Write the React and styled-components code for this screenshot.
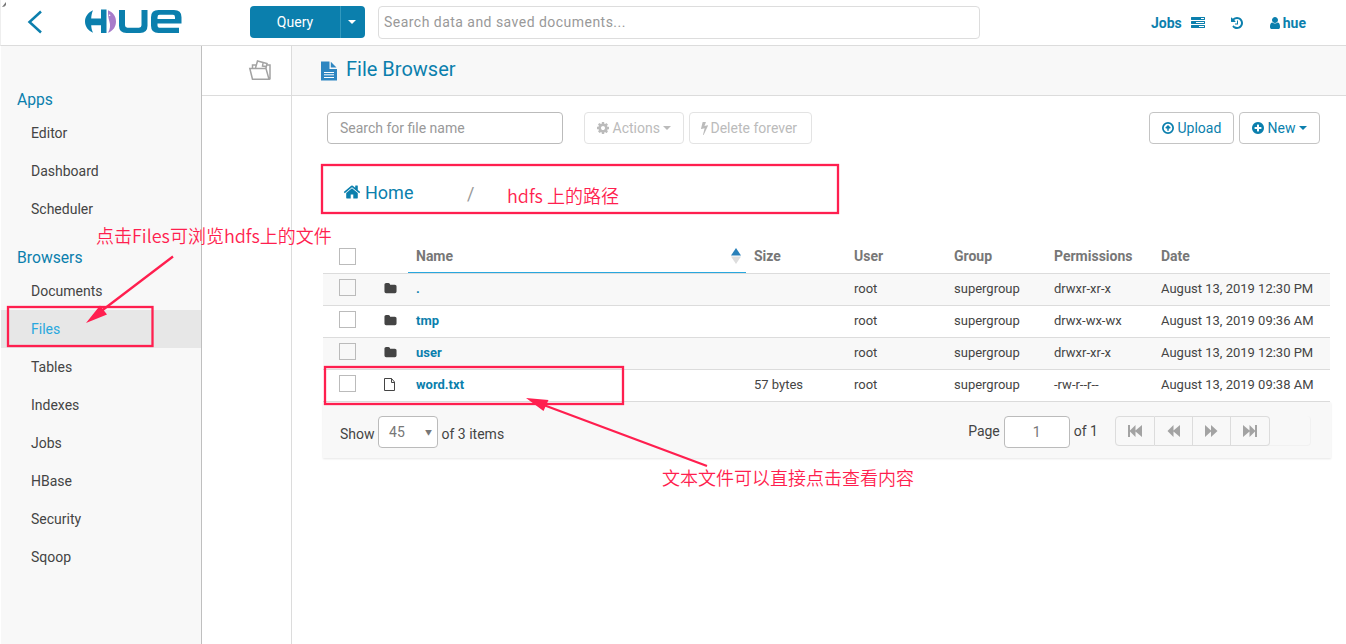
import React from 'react';
import styled, { createGlobalStyle } from 'styled-components';

const icons = {
    home: 'M1472 992v480q0 26-19 45t-45 19h-384v-384h-256v384h-384q-26 0-45-19t-19-45v-480q0-1 .5-3t.5-3l575-474 575 474q1 2 1 6zm223-69l-62 74q-8 9-21 11h-3q-13 0-21-7l-692-577-692 577q-12 8-24 7-13-2-21-11l-62-74q-8-10-7-23.5t11-21.5l719-599q32-26 76-26t76 26l244 204v-195q0-14 9-23t23-9h192q14 0 23 9t9 23v408l219 182q10 8 11 21.5t-7 23.5z',
    cog: 'M1152 896q0-106-75-181t-181-75-181 75-75 181 75 181 181 75 181-75 75-181zm512-109v222q0 12-8 23t-20 13l-185 28q-19 54-39 91 35 50 107 138 10 12 10 25t-9 23q-27 37-99 108t-94 71q-12 0-26-9l-138-108q-44 23-91 38-16 136-29 186-7 28-36 28h-222q-14 0-24.5-8.5t-11.5-21.5l-28-184q-49-16-90-37l-141 107q-10 9-25 9-14 0-25-11-126-114-165-168-7-10-7-23 0-12 8-23 15-21 51-66.5t54-70.5q-27-50-41-99l-183-27q-13-2-21-12.5t-8-23.5v-222q0-12 8-23t19-13l186-28q14-46 39-92-40-57-107-138-10-12-10-24 0-10 9-23 26-36 98.5-107.5t94.5-71.5q13 0 26 10l138 107q44-23 91-38 16-136 29-186 7-28 36-28h222q14 0 24.5 8.5t11.5 21.5l28 184q49 16 90 37l142-107q9-9 24-9 13 0 25 10 129 119 165 170 7 8 7 22 0 12-8 23-15 21-51 66.5t-54 70.5q26 50 41 98l183 28q13 2 21 12.5t8 23.5z',
    bolt: 'M1333 566q18 20 7 44l-540 1157q-13 25-42 25-4 0-14-2-17-5-25.5-19t-4.5-30l197-808-406 101q-4 1-12 1-18 0-31-11-18-15-13-39l201-825q4-14 16-23t28-9h328q19 0 32 12.5t13 29.5q0 8-5 18l-171 463 396-98q8-2 12-2 19 0 34 15z',
    plus: 'M1344 960v-128q0-26-19-45t-45-19h-256v-256q0-26-19-45t-45-19h-128q-26 0-45 19t-19 45v256h-256q-26 0-45 19t-19 45v128q0 26 19 45t45 19h256v256q0 26 19 45t45 19h128q26 0 45-19t19-45v-256h256q26 0 45-19t19-45zm320-64q0 209-103 385.5t-279.5 279.5-385.5 103-385.5-103-279.5-279.5-103-385.5 103-385.5 279.5-279.5 385.5-103 385.5 103 279.5 279.5 103 385.5z',
    upload: 'M896 352a544 544 0 1 0 0 1088a544 544 0 1 0 0-1088zM896 128a768 768 0 1 1 0 1536a768 768 0 1 1 0-1536zM896 500L1250 850L1150 960H990V1250H802V960H642L542 850z',
    user: 'M1536 1399q0 109-62.5 187t-150.5 78h-854q-88 0-150.5-78t-62.5-187q0-85 8.5-160.5t31.5-152 58.5-131 94-89 134.5-34.5q131 128 313 128t313-128q76 0 134.5 34.5t94 89 58.5 131 31.5 152 8.5 160.5zm-256-887q0 159-112.5 271.5t-271.5 112.5-271.5-112.5-112.5-271.5 112.5-271.5 271.5-112.5 271.5 112.5 112.5 271.5z',
    history: 'M1664 896q0 156-61 298t-164 245-245 164-298 61q-172 0-327-72.5t-264-204.5q-7-10-6.5-22.5t8.5-20.5l137-138q10-9 25-9 16 2 23 12 73 95 179 147t225 52q104 0 198.5-40.5t163.5-109.5 109.5-163.5 40.5-198.5-40.5-198.5-109.5-163.5-163.5-109.5-198.5-40.5q-98 0-188 35.5t-160 101.5l137 138q31 30 14 69-17 40-59 40h-448q-26 0-45-19t-19-45v-448q0-42 40-59 39-17 69 14l130 129q107-101 244.5-156.5t284.5-55.5q156 0 298 61t245 164 164 245 61 298zm-640-288v448q0 14-9 23t-23 9h-320q-14 0-23-9t-9-23v-64q0-14 9-23t23-9h224v-352q0-14 9-23t23-9h64q14 0 23 9t9 23z',
    folder: 'M1728 608v704q0 92-66 158t-158 66h-1216q-92 0-158-66t-66-158v-960q0-92 66-158t158-66h320q92 0 158 66t66 158v32h672q92 0 158 66t66 158z',
    tasks: 'M1024 1408h640v-128h-640v128zm-384-512h1024v-128h-1024v128zm640-512h384v-128h-384v128zm512 832v256q0 26-19 45t-45 19h-1664q-26 0-45-19t-19-45v-256q0-26 19-45t45-19h1664q26 0 45 19t19 45zm0-512v256q0 26-19 45t-45 19h-1664q-26 0-45-19t-19-45v-256q0-26 19-45t45-19h1664q26 0 45 19t19 45zm0-512v256q0 26-19 45t-45 19h-1664q-26 0-45-19t-19-45v-256q0-26 19-45t45-19h1664q26 0 45 19t19 45z',
};

const apps = ['Editor', 'Dashboard', 'Scheduler'];
const browsers = ['Documents', 'Files', 'Tables', 'Indexes', 'Jobs', 'HBase', 'Security', 'Sqoop'];

const files = [
    { name: '.', type: 'dir', size: '', perm: 'drwxr-xr-x', date: 'August 13, 2019 12:30 PM' },
    { name: 'tmp', type: 'dir', size: '', perm: 'drwx-wx-wx', date: 'August 13, 2019 09:36 AM' },
    { name: 'user', type: 'dir', size: '', perm: 'drwxr-xr-x', date: 'August 13, 2019 12:30 PM' },
    { name: 'word.txt', type: 'file', size: '57 bytes', perm: '-rw-r--r--', date: 'August 13, 2019 09:38 AM' },
];

const Fa = ({ name, size = 14 }) => (
    <svg width={size} height={size} viewBox="0 0 1792 1792" fill="currentColor">
        <path d={icons[name]} fillRule={name === 'upload' ? 'evenodd' : 'nonzero'} />
    </svg>
);

const Bolt = () => (
    <svg width="7" height="14" viewBox="448 0 896 1792" fill="currentColor">
        <path d={icons.bolt} />
    </svg>
);

const HueLogo = () => (
    <svg width="97" height="25" viewBox="0 0 97 26" preserveAspectRatio="none">
        <path d="M8 1.2C3 3.5 0 8 0 13s3 9.500 8 11.700C6.800 22 6.300 19.500 6.200 17H16v8h5.500V.500H16V10H6.200C6.300 7 6.800 4 8 1.200z" fill="#0b7fad" />
        <path d="M23 1.200C28.500 3.500 31 8 31 13s-2.500 9.500-8 11.800c2.200-4 2.600-7.800 1.400-11.800-1-3.500-1.600-7-1.400-11.800z" fill="#a77bca" />
        <circle cx="24.600" cy="6.500" r=".8" fill="#fff" />
        <path d="M34 1v16.500q0 7.500 7.500 7.500H55q7.500 0 7.500-7.500V1h-6v16q0 2.500-2.500 2.500H42.500Q40 19.500 40 17V1z" fill="#0b7fad" />
        <path fillRule="evenodd" d="M73.500 1H89q7.500 0 7.500 7.500V15H72.500v2.500q0 2 2 2H94V25H73.500Q66 25 66 17.500v-9Q66 1 73.500 1zM72.500 10.500H90V8.500q0-2.500-2-2.500H74.500q-2 0-2 2.500z" fill="#0b7fad" />
    </svg>
);

const PageIcon = ({ kind }) => (
    <svg width="18" height="14" viewBox="0 0 18 14" fill="#a3a3a3">
        {kind === 'first' && <path d="M2 1h2v5.500L9.500 1v5.500L16 1v12l-6.500-5.500V13L4 7.500V13H2z" />}
        {kind === 'prev' && <path d="M8.500 1v5.500L15 1v12L8.500 7.500V13L2.500 7z" />}
        {kind === 'next' && <path d="M8 1v5.500L2 1v12l6-5.500V13l6.500-6z" />}
        {kind === 'last' && <path d="M2 1v12l6.500-5.500V13l5.500-5.500V13h2V1h-2v5.500L8.500 1v5.500z" />}
    </svg>
);

const App = () => {
    return (
        <Page>
            <GlobalStyle />
            <Navbar>
                <Back>
                    <svg width="16" height="24" viewBox="0 0 16 24">
                        <path d="M14 1.500L2.500 12L14 22.500" fill="none" stroke="#0b7fad" strokeWidth="2.500" />
                    </svg>
                </Back>
                <Logo><HueLogo /></Logo>
                <QueryGroup>
                    <Query>Query</Query>
                    <QueryToggle><Caret /></QueryToggle>
                </QueryGroup>
                <TopSearch placeholder="Search data and saved documents..." />
                <NavRight>
                    <NavItem $gap={9}>Jobs <Fa name="tasks" /></NavItem>
                    <NavItem $shift={2}><Fa name="history" /></NavItem>
                    <NavItem $gap={1}><Fa name="user" />hue</NavItem>
                </NavRight>
            </Navbar>
            <Body>
                <Sidebar>
                    <MenuTitle>Apps</MenuTitle>
                    {apps.map((app) => <MenuItem key={app}>{app}</MenuItem>)}
                    <MenuTitle $next>Browsers</MenuTitle>
                    {browsers.map((item) => (
                        <MenuItem key={item} $active={item === 'Files'}>{item}</MenuItem>
                    ))}
                </Sidebar>
                <Assist>
                    <AssistTab>
                        <svg width="24" height="22" viewBox="0 0 24 22" fill="none" stroke="#a3a3a3" strokeWidth="1.500">
                            <path d="M4.500 20.200L1.800 9.500H18L21 20.200zM22 20.500V6H19M4.500 9V6H8M7.500 9L9.500 2L19 4.500L18 9M15 4L14.500 7L18 7.500" />
                        </svg>
                    </AssistTab>
                </Assist>
                <Main>
                    <TitleBar>
                        <svg width="17" height="20" viewBox="0 0 17 20">
                            <path d="M1 .500H9.500v7.500H17V19.500H1z" fill="#2e86c1" />
                            <path d="M10.800 .800L16.500 6.500H10.800z" fill="#2e86c1" />
                            <path d="M4 11.500h10M4 13.800h10M4 16.500h10" stroke="#fff" strokeWidth="1" />
                        </svg>
                        <h1>File Browser</h1>
                    </TitleBar>
                    <Toolbar>
                        <FileSearch placeholder="Search for file name" />
                        <Button $disabled $width={100}><Fa name="cog" />Actions<Caret /></Button>
                        <Button $disabled $width={123}><Bolt />Delete forever</Button>
                        <Spacer />
                        <Button $width={85}><Fa name="upload" />Upload</Button>
                        <Button $width={81}><Fa name="plus" />New<Caret /></Button>
                    </Toolbar>
                    <Breadcrumb>
                        <Home><Fa name="home" size={18} />Home</Home>
                        <Slash>/</Slash>
                    </Breadcrumb>
                    <Table>
                        <HeadRow>
                            <CheckCell><Check /></CheckCell>
                            <span />
                            <SortCell>
                                Name
                                <svg width="10" height="16" viewBox="0 0 10 16">
                                    <path d="M0 7.500L5 0l5 7.500z" fill="#2980b9" />
                                    <path d="M0 8.500h10L5 16z" fill="#ddd" />
                                </svg>
                            </SortCell>
                            <Cell>Size</Cell>
                            <Cell>User</Cell>
                            <Cell>Group</Cell>
                            <Cell>Permissions</Cell>
                            <Cell>Date</Cell>
                        </HeadRow>
                        {files.map((file, index) => (
                            <Row key={file.name} $odd={index % 2 === 0}>
                                <CheckCell><Check /></CheckCell>
                                <Cell>
                                    {file.type === 'dir' ? <Fa name="folder" size={13} /> : (
                                        <svg width="12" height="14" viewBox="0 0 12 14" fill="none" stroke="#444">
                                            <path d="M.500 .500H7.500L10.500 4V12.500H.500zM7.500 .500V4.500H10.500" />
                                        </svg>
                                    )}
                                </Cell>
                                <NameCell>{file.name}</NameCell>
                                <Cell>{file.size}</Cell>
                                <Cell>root</Cell>
                                <Cell>supergroup</Cell>
                                <Cell>{file.perm}</Cell>
                                <Cell>{file.date}</Cell>
                            </Row>
                        ))}
                    </Table>
                    <Footer>
                        <Show>
                            <Label>Show</Label>
                            <Select>45<i>▼</i></Select>
                            <Label>of 3 items</Label>
                        </Show>
                        <Pager>
                            Page
                            <PageInput defaultValue="1" />
                            of 1
                            <PageButtons>
                                <PageButton $width={40}><PageIcon kind="first" /></PageButton>
                                <PageButton><PageIcon kind="prev" /></PageButton>
                                <PageButton><PageIcon kind="next" /></PageButton>
                                <PageButton $width={39}><PageIcon kind="last" /></PageButton>
                            </PageButtons>
                        </Pager>
                    </Footer>
                </Main>
            </Body>

            {/* notes drawn over the page */}
            <Marks width="1346" height="644" viewBox="0 0 1346 644">
                <path d="M2 7L6 2V5Q5 7 2 7z" fill="#777" />
                <g fill="none" stroke="#ff1f4f" strokeWidth="2.300">
                    <rect x="322" y="165" width="516" height="48" />
                    <rect x="8" y="307" width="144.500" height="39" />
                    <rect x="325" y="367" width="298" height="37" />
                    <path d="M173 256.500L102 310.500M707 466L545 405.500" />
                </g>
                <path d="M86 323L100 305.500L107 314.500zM526 398L548.500 400L543.500 411z" fill="#ff1f4f" />
            </Marks>
            <Note $x={96} $y={222}>点击Files可浏览hdfs上的文件</Note>
            <Note $x={507} $y={182}>hdfs 上的路径</Note>
            <Note $x={662} $y={464}>文本文件可以直接点击查看内容</Note>
        </Page>
    )
}
export default App;

const GlobalStyle = createGlobalStyle`
    *{
        box-sizing:border-box;
    }

    body{
        margin:0;
        font-family:Roboto, "Noto Sans CJK SC", sans-serif;
        font-size:14px;
        color:#444;
        background:#fff;
    }

    input{
        font-family:inherit;
        font-size:14px;
        outline:none;
    }

    input::placeholder{
        color:#999;
        opacity:1;
    }

    svg{
        flex-shrink:0;
    }
`

const Page = styled.div`
    width:1346px;
    height:644px;
    position:relative;
    overflow:hidden;
    display:flex;
    flex-direction:column;
`

const Navbar = styled.div`
    height:46px;
    flex-shrink:0;
    display:flex;
    border-bottom:1px solid #dcdcdc;
    border-left:1px solid #eee;
`

const Back = styled.div`
    width:84px;
    padding:10px 0 0 26px;
`

const Logo = styled.div`
    width:165px;
    padding:9px 0 0 0;
`

const QueryGroup = styled.div`
    display:flex;
    width:115px;
    height:32px;
    margin:6px 13px 0 0;
    border-radius:4px;
    background:#0b7fad;
    color:#fff;
`

const Query = styled.div`
    width:91px;
    line-height:32px;
    text-align:center;
    border-right:1px solid #3299be;
`

const QueryToggle = styled.div`
    flex:1;
    display:flex;
    align-items:center;
    justify-content:center;
    padding:0 2px 0 0;
`

const Caret = styled.span`
    border:4px solid transparent;
    border-top-color:currentColor;
    border-bottom:0;
`

const TopSearch = styled.input`
    width:602px;
    height:33px;
    margin:6px 0 0 0;
    padding:0 5px 2px 5px;
    border:1px solid #ddd;
    border-radius:4px;
    letter-spacing:0.47px;
`

const NavRight = styled.div`
    display:flex;
    flex:1;
    justify-content:space-between;
    padding:0 40px 0 171px;
`

const NavItem = styled.div`
    display:flex;
    align-items:center;
    gap:${({ $gap }) => $gap || 0}px;
    padding:0 0 0 ${({ $shift }) => $shift || 0}px;
    color:#0b7fad;
    font-weight:700;
`

const Body = styled.div`
    flex:1;
    display:flex;
`

const Sidebar = styled.div`
    width:202px;
    padding:38px 0 0 0;
    background:#f8f8f8;
    border-right:1px solid #bfbfbf;
    border-left:1px solid #fff;
`

const MenuTitle = styled.div`
    height:30px;
    line-height:32px;
    margin:${({ $next }) => $next ? '14px' : '0'} 0 0 0;
    padding:0 0 0 16px;
    font-size:15.7px;
    color:#0b7fad;
`

const MenuItem = styled.div`
    height:38px;
    line-height:38px;
    padding:0 0 0 30px;
    color:${({ $active }) => $active ? '#29a7de' : '#444'};
    background:${({ $active }) => $active ? '#e7e7e7' : 'transparent'};
`

const Assist = styled.div`
    width:90px;
    border-right:1px solid #dcdcdc;
`

const AssistTab = styled.div`
    height:50px;
    padding:13px 0 0 46px;
    border-bottom:1px solid #dcdcdc;
`

const Main = styled.div`
    flex:1;
`

const TitleBar = styled.div`
    height:50px;
    display:flex;
    align-items:center;
    gap:9px;
    padding:0 0 0 28px;
    background:#f8f8f8;
    border-bottom:1px solid #dcdcdc;

    h1{
        margin:-3px 0 0 0;
        font-size:20px;
        font-weight:400;
        color:#0b7fad;
    }
`

const Toolbar = styled.div`
    display:flex;
    gap:5px;
    padding:16px 26px 0 35px;
`

const FileSearch = styled.input`
    width:236px;
    height:32px;
    margin:0 16px 0 0;
    padding:0 12px;
    border:1px solid #bbb;
    border-radius:4px;
`

const Button = styled.div`
    width:${({ $width }) => $width}px;
    height:32px;
    display:flex;
    align-items:center;
    padding:0 0 0 11px;
    gap:2.500px;
    white-space:nowrap;
    border:1px solid ${({ $disabled }) => $disabled ? '#e3e3e3' : '#c4c4c4'};
    border-radius:4px;
    color:${({ $disabled }) => $disabled ? '#bbb' : '#0b7fad'};

    span{
        margin:0 0 0 1px;
    }
`

const Spacer = styled.div`
    flex:1;
`

const Breadcrumb = styled.div`
    height:96px;
    display:flex;
    align-items:center;
    padding:0 0 0 51px;
    font-size:18px;
`

const Home = styled.div`
    width:124px;
    display:flex;
    align-items:center;
    gap:4px;
    color:#0b7fad;
`

const Slash = styled.div`
    color:#999;
    margin:2px 0 0 0;
`

const Table = styled.div`
    width:1007px;
    margin:0 0 0 31px;
`

const Row = styled.div`
    display:grid;
    grid-template-columns:53px 32px 338px 100px 100px 100px 107px 177px;
    height:32px;
    font-size:13px;
    background:${({ $odd }) => $odd ? '#f8f8f8' : '#fff'};
    border-bottom:1px solid #dcdcdc;
`

const HeadRow = styled(Row)`
    height:34px;
    font-size:14px;
    font-weight:700;
    color:#777;
    background:#fff;
`

const Cell = styled.div`
    display:flex;
    align-items:center;
    padding:0 0 2px 8px;
    white-space:nowrap;
`

const NameCell = styled(Cell)`
    font-weight:700;
    color:#0b7fad;
`

const SortCell = styled(Cell)`
    justify-content:space-between;
    padding:0 5px 0 8px;
    border-bottom:1px solid #29a7de;
`

const CheckCell = styled.div`
    display:flex;
    align-items:center;
    padding:0 0 4px 16px;

    ${HeadRow} &{
        padding-bottom:0;
    }
`

const Check = styled.div`
    width:17px;
    height:17px;
    border:1px solid #bbb;
`

const Footer = styled.div`
    width:1008px;
    height:56px;
    margin:0 0 0 31px;
    display:flex;
    justify-content:space-between;
    padding:14px 20px 0 17px;
    background:#f8f8f8;
    box-shadow:0 1px 2px rgba(0,0,0,0.1);
`

const Show = styled.div`
    height:32px;
    display:flex;
    align-items:center;
    gap:3.500px;
`

const Label = styled.span`
    padding:4px 0 0 0;
`

const Select = styled.div`
    width:60px;
    height:32px;
    display:flex;
    align-items:center;
    justify-content:space-between;
    padding:0 5px 0 10px;
    border:1px solid #bbb;
    border-radius:4px;
    background:#fff;
    color:#777;

    i{
        font-style:normal;
        font-size:7px;
    }
`

const Pager = styled.div`
    height:30px;
    display:flex;
    align-items:center;
    gap:4px;
`

const PageInput = styled.input`
    width:66px;
    height:32px;
    margin:2px 0 0 0;
    border:1px solid #bbb;
    border-radius:4px;
    background:#fff;
    text-align:center;
    color:#777;
`

const PageButtons = styled.div`
    display:flex;
    width:196px;
    height:30px;
    margin:0 0 0 13px;
    border:1px solid #f1f1f1;
    border-width:0 1px 1px 0;
    border-radius:4px;
`

const PageButton = styled.div`
    width:${({ $width }) => $width || 38}px;
    height:30px;
    display:flex;
    align-items:center;
    justify-content:center;
    border:1px solid #dcdcdc;
    border-left-width:0;

    &:first-child{
        border-left-width:1px;
        border-radius:4px 0 0 4px;
    }

    &:last-child{
        border-radius:0 4px 4px 0;
    }
`

const Marks = styled.svg`
    position:absolute;
    top:0;
    left:0;
    pointer-events:none;
`

const Note = styled.div`
    position:absolute;
    left:${({ $x }) => $x}px;
    top:${({ $y }) => $y}px;
    font-family:"Noto Sans CJK SC", sans-serif;
    font-size:18px;
    font-weight:350;
    line-height:26px;
    white-space:nowrap;
    color:#ff1f4f;
`
